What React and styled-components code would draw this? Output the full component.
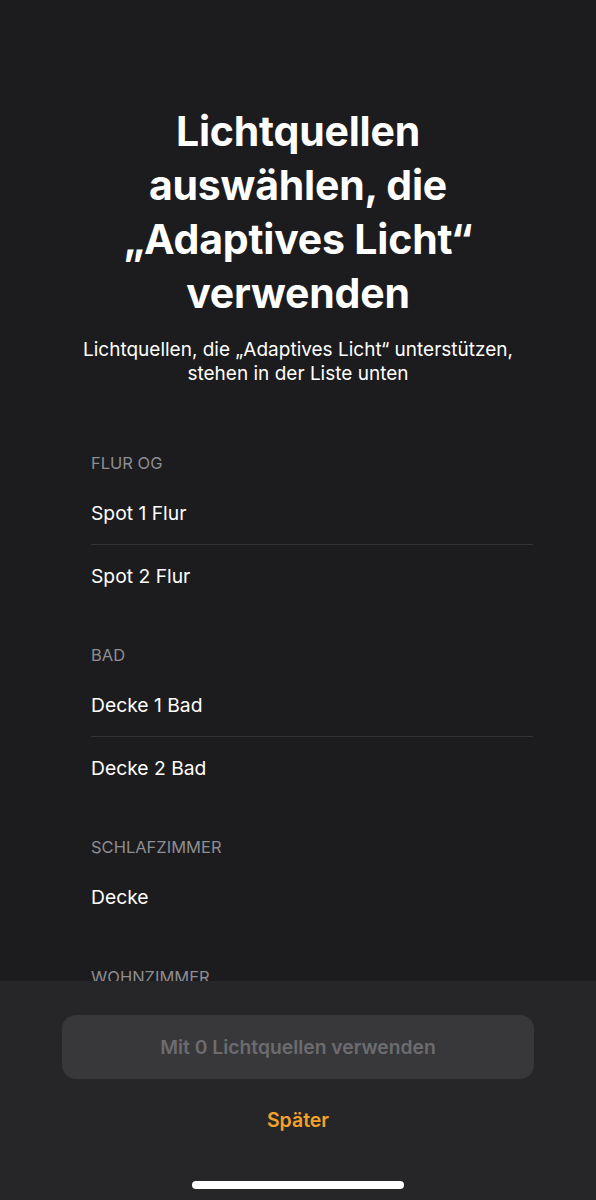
import styled, { createGlobalStyle } from "styled-components"

const GlobalStyle = createGlobalStyle`
  html, body {
    margin: 0;
    padding: 0;
    background: #1c1c1e;
  }
  body {
    font-family: Inter, "Noto Sans", "Liberation Sans", sans-serif;
    -webkit-font-smoothing: antialiased;
  }
`;

const Screen = styled.div`
  height: 1200px;
  display: flex;
  flex-direction: column;
  background: #1c1c1e;
  color: #fff;
  overflow: hidden;
`;

const Scroll = styled.div`
  flex: 1;
  overflow: hidden;
  padding-top: 104px;
`;

const Title = styled.h1`
  margin: 0 auto;
  max-width: 440px;
  text-align: center;
  font-size: 41px;
  line-height: 54px;
  font-weight: 700;
  letter-spacing: -0.2px;
`;

const Subtitle = styled.p`
  margin: 18px auto 0;
  text-align: center;
  font-size: 19px;
  line-height: 24px;
  font-weight: 400;
`;

const List = styled.div`
  margin: 67px 63px 0;
`;

const Section = styled.section`
  & + & {
    margin-top: 39px;
  }
`;

const SectionHeader = styled.div`
  padding-left: 28px;
  margin-bottom: 9px;
  font-size: 16.5px;
  line-height: 20px;
  color: #8d8d92;
  text-transform: uppercase;
`;

const Row = styled.div`
  height: 62px;
  display: flex;
  align-items: center;
  margin-left: 28px;
  font-size: 19.3px;
  color: #fff;
  border-top: ${(p) => (p.$first ? "none" : "1px solid #333335")};
  box-sizing: border-box;
`;

const Footer = styled.div`
  height: 219px;
  flex-shrink: 0;
  background: #262628;
  display: flex;
  flex-direction: column;
  align-items: center;
  padding-top: 34px;
  box-sizing: border-box;
`;

const PrimaryButton = styled.button`
  width: 472px;
  height: 64px;
  border: 0;
  border-radius: 14px;
  background: #38383a;
  color: #6c6c70;
  font-family: inherit;
  font-size: 19.3px;
  font-weight: 600;
  cursor: default;
`;

const LaterButton = styled.button`
  margin-top: 24px;
  background: none;
  border: 0;
  color: #f2a22a;
  font-family: inherit;
  font-size: 19.5px;
  font-weight: 600;
  line-height: 32px;
`;

const HomeIndicator = styled.div`
  margin-top: auto;
  margin-bottom: 11px;
  width: 212px;
  height: 8px;
  border-radius: 4px;
  background: #fff;
`;

const sections = [
  { name: "Flur OG", lights: ["Spot 1 Flur", "Spot 2 Flur"] },
  { name: "Bad", lights: ["Decke 1 Bad", "Decke 2 Bad"] },
  { name: "Schlafzimmer", lights: ["Decke"] },
  { name: "Wohnzimmer", lights: [] },
];

export default function App() {
  return (
    <Screen>
      <GlobalStyle />
      <Scroll>
        <Title>Lichtquellen auswählen, die „Adaptives Licht“ verwenden</Title>
        <Subtitle>
          Lichtquellen, die „Adaptives Licht“ unterstützen,
          <br />
          stehen in der Liste unten
        </Subtitle>
        <List>
          {sections.map((s) => (
            <Section key={s.name}>
              <SectionHeader>{s.name}</SectionHeader>
              {s.lights.map((l, i) => (
                <Row key={l} $first={i === 0}>{l}</Row>
              ))}
            </Section>
          ))}
        </List>
      </Scroll>
      <Footer>
        <PrimaryButton>Mit 0 Lichtquellen verwenden</PrimaryButton>
        <LaterButton>Später</LaterButton>
        <HomeIndicator />
      </Footer>
    </Screen>
  )
}
